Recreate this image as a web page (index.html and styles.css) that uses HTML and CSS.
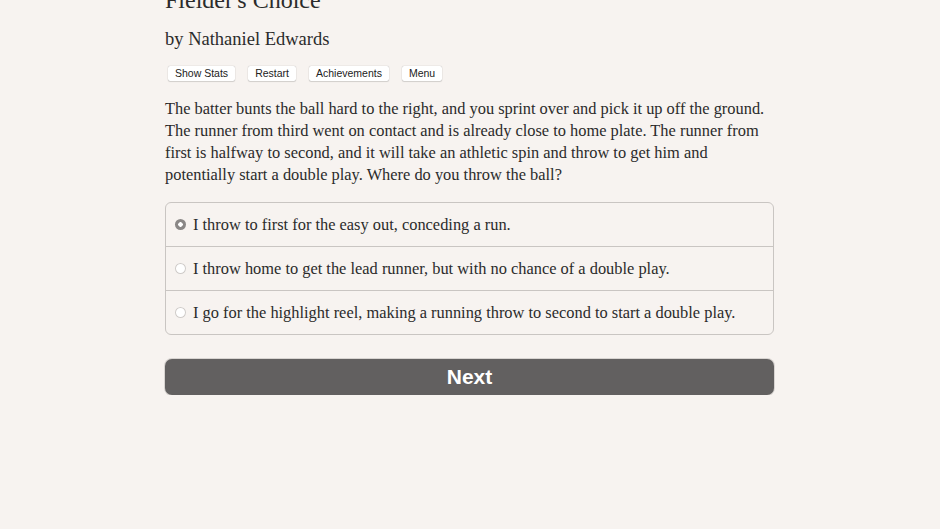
FILE: index.html
```html
<!DOCTYPE html>
<html>
<head>
<meta charset="utf-8">
<link rel="stylesheet" href="styles.css">
</head>
<body>
<main class="page">
  <h1 class="title">Fielder's Choice</h1>
  <p class="byline">by Nathaniel Edwards</p>
  <nav class="toolbar">
    <button class="tool">Show Stats</button>
    <button class="tool">Restart</button>
    <button class="tool">Achievements</button>
    <button class="tool">Menu</button>
  </nav>
  <p class="passage">The batter bunts the ball hard to the right, and you sprint over and pick it up off the ground. The runner from third went on contact and is already close to home plate. The runner from first is halfway to second, and it will take an athletic spin and throw to get him and potentially start a double play. Where do you throw the ball?</p>
  <ul class="choices">
    <li class="choice"><span class="radio checked"></span>I throw to first for the easy out, conceding a run.</li>
    <li class="choice"><span class="radio"></span>I throw home to get the lead runner, but with no chance of a double play.</li>
    <li class="choice"><span class="radio"></span>I go for the highlight reel, making a running throw to second to start a double play.</li>
  </ul>
  <button class="next">Next</button>
</main>
</body>
</html>
```
FILE: styles.css
```css
html, body {
  margin: 0;
  padding: 0;
  background: #f7f3f0;
}
body {
  font-family: "Liberation Serif", "Times New Roman", serif;
  color: #2b2b2b;
}
.page {
  width: 609px;
  margin: -16px 0 0 165px;
  display: flex;
  flex-direction: column;
}
.title {
  font-size: 24px;
  font-weight: normal;
  margin: 0;
  line-height: 32px;
}
.byline {
  font-size: 18.5px;
  margin: 11px 0 0;
  line-height: 24px;
}
.toolbar {
  display: flex;
  gap: 13px;
  margin: 15px 0 0 3px;
}
.tool {
  font-family: "Liberation Sans", Arial, sans-serif;
  font-size: 10.5px;
  color: #222;
  background: #fff;
  border: none;
  border-radius: 2px;
  box-shadow: 0 0 1px rgba(0,0,0,0.35), 0 1px 1px rgba(0,0,0,0.12);
  height: 15px;
  padding: 0 7px;
  line-height: 15px;
}
.passage {
  font-size: 16.4px;
  line-height: 22px;
  margin: 17px 0 0;
}
.choices {
  list-style: none;
  margin: 16px 0 0;
  padding: 0;
  border: 1px solid #c9c5c2;
  border-radius: 6px;
  overflow: hidden;
}
.choice {
  display: flex;
  align-items: center;
  height: 43px;
  padding: 0 9px;
  font-size: 16.4px;
  border-top: 1px solid #c9c5c2;
}
.choice:first-child {
  border-top: none;
}
.radio {
  width: 11px;
  height: 11px;
  border-radius: 50%;
  background: #fff;
  box-shadow: inset 0 0 0 1px #cfcbc8;
  margin-right: 7px;
  flex: none;
}
.radio.checked {
  background: radial-gradient(circle, #fff 0 2px, #8a8786 2.5px);
  box-shadow: none;
}
.next {
  margin-top: 24px;
  height: 36px;
  border: none;
  border-radius: 7px;
  background: #626060;
  color: #fff;
  font-family: "Liberation Sans", Arial, sans-serif;
  font-weight: bold;
  font-size: 21px;
  box-shadow: 0 0 0 1px #d8d4d1;
}
```
